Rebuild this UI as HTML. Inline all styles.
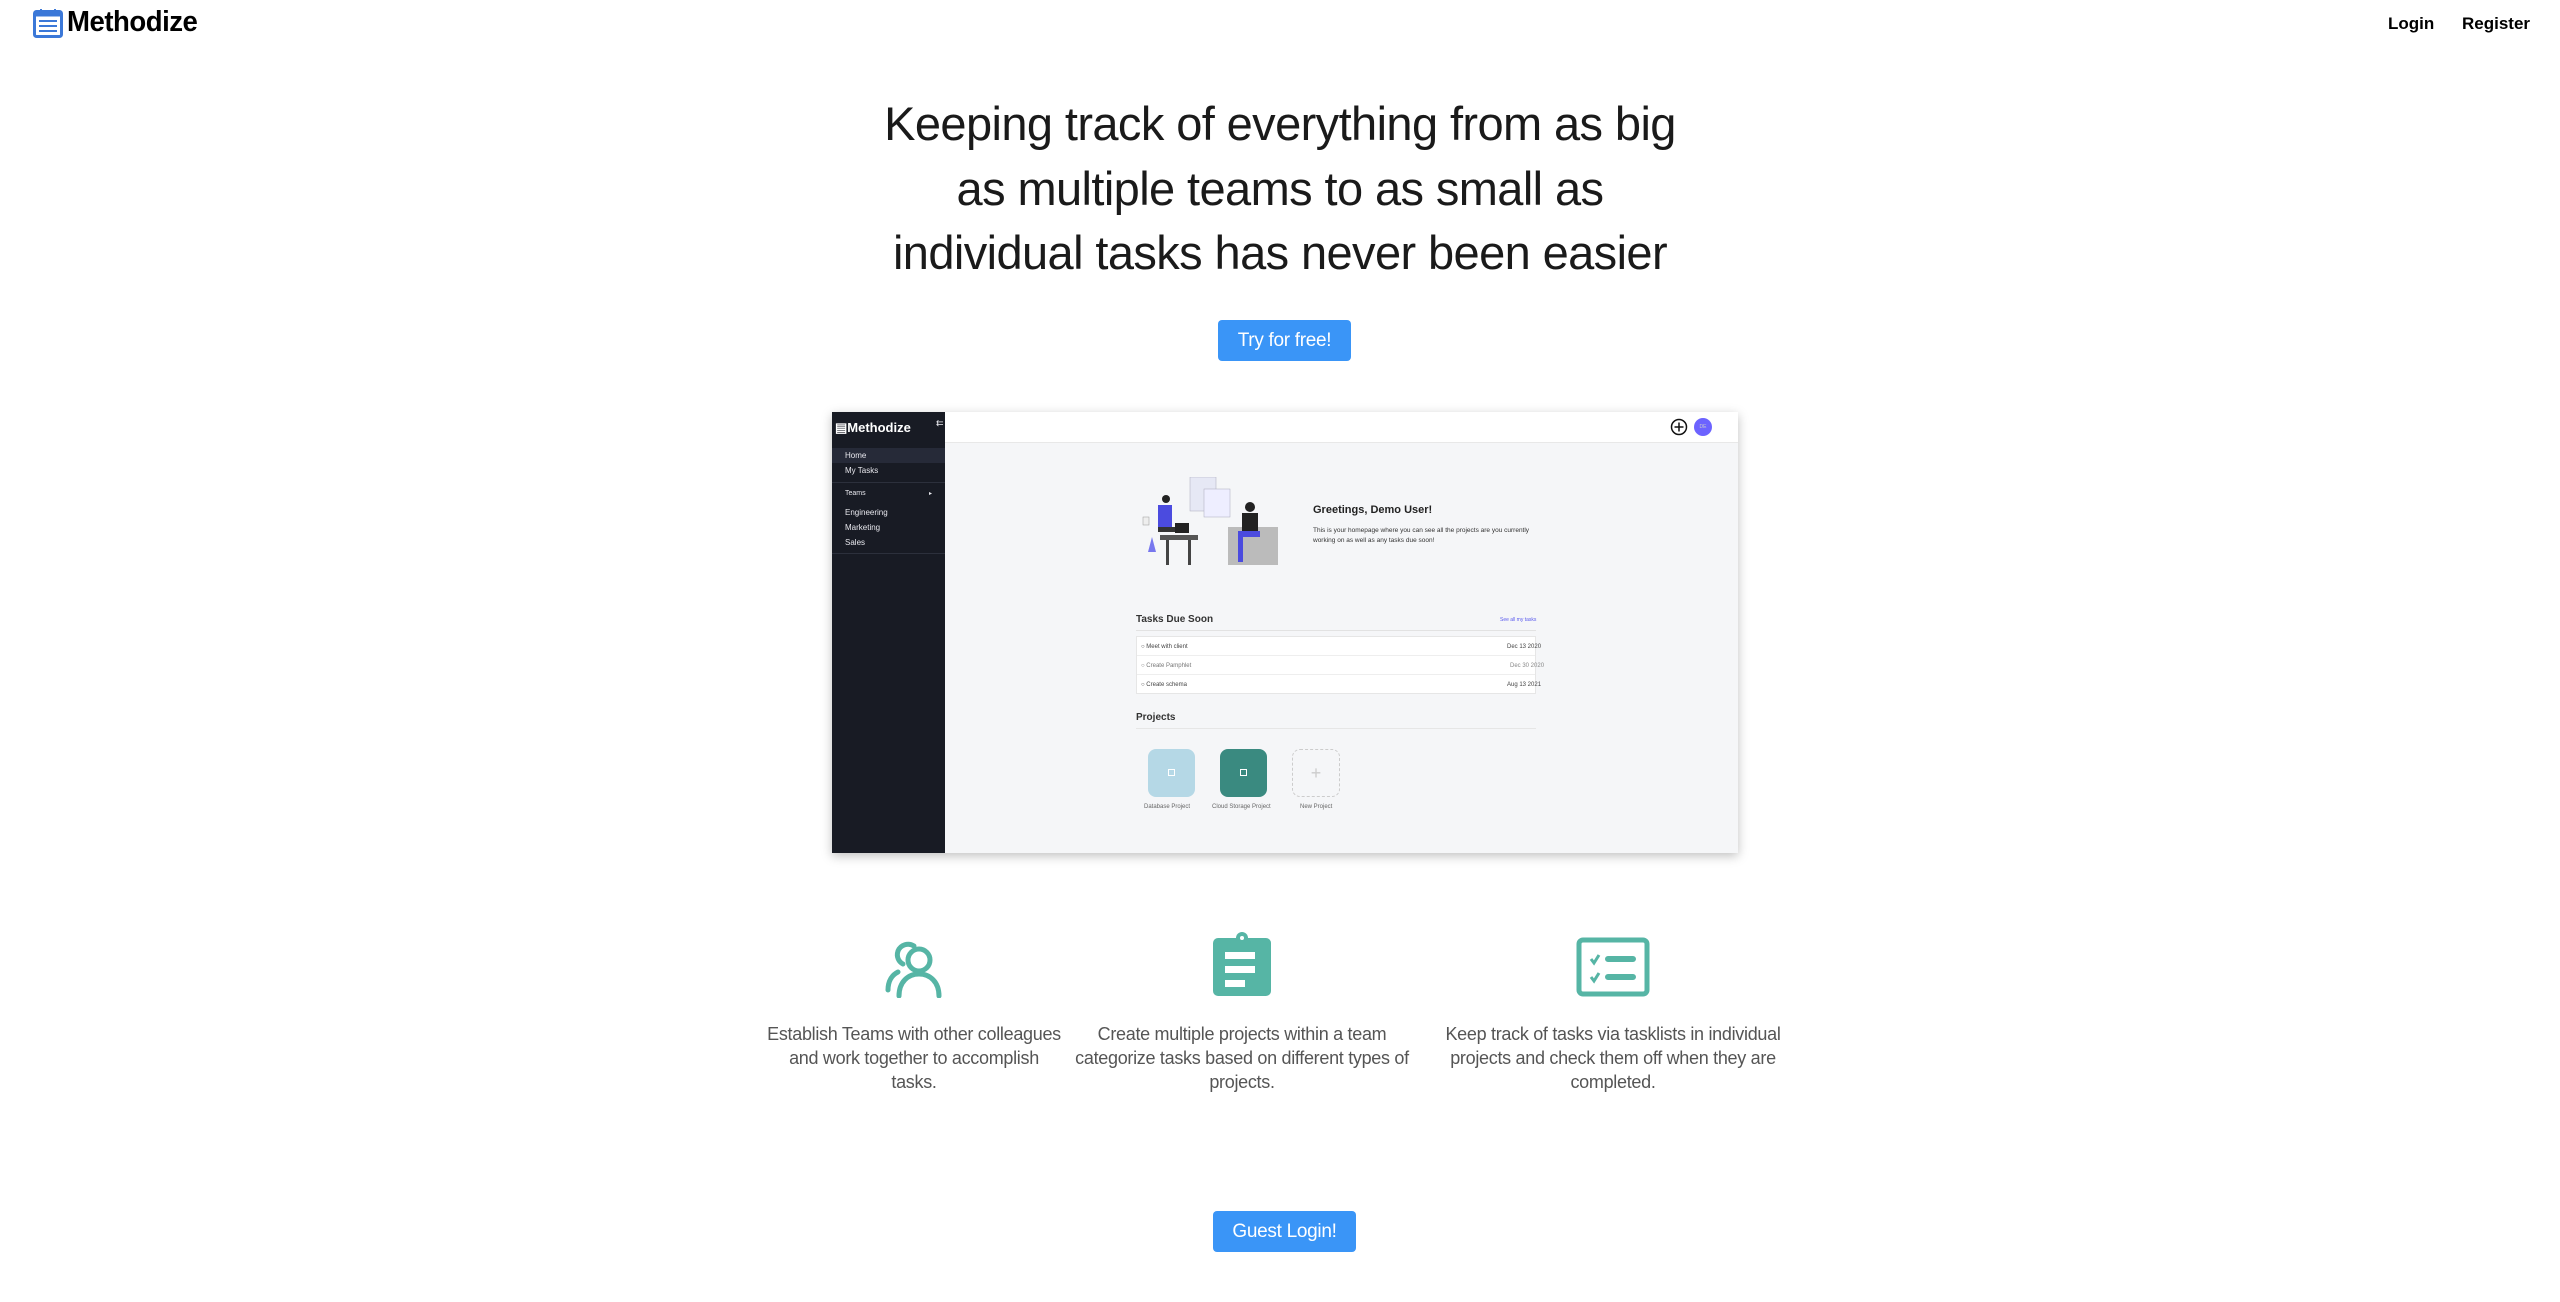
<!DOCTYPE html>
<html><head><meta charset="utf-8"><style>
*{margin:0;padding:0;box-sizing:border-box}
body{width:2560px;height:1302px;background:#fff;font-family:"Liberation Sans",sans-serif;position:relative;overflow:hidden;color:#212529}
.abs{position:absolute}
.logo{left:33px;top:6px;display:flex;align-items:center}
.logo span{font-weight:900;font-size:29px;color:#000;margin-left:4px;letter-spacing:-0.5px;transform:scaleX(0.95);transform-origin:left}
.nav{top:14px;font-weight:bold;font-size:17px;color:#000}
h1{position:absolute;left:0;width:2560px;top:92px;text-align:center;font-weight:300;font-size:47px;line-height:64.5px;color:#1a1a1a;letter-spacing:-0.6px}
.btn{position:absolute;background:#3a95f7;color:#fff;border-radius:4px;text-align:center;font-size:19px;letter-spacing:-0.3px}
.mock{left:832px;top:412px;width:906px;height:441px;box-shadow:0 3px 10px rgba(0,0,0,0.25);background:#f5f6f8;overflow:hidden}
.side{left:0;top:0;width:113px;height:441px;background:#181b24;color:#e8e8ee;font-size:8px}
.side div{position:absolute;left:13px}
.top{left:113px;top:0;right:0;height:31px;background:#fff;border-bottom:1px solid #e8e8e8}
.feat{position:absolute;top:1022px;width:360px;text-align:center;font-size:18px;line-height:24px;color:#555;letter-spacing:-0.3px}
.t{font-size:6px;color:#444}
</style></head><body>
<div class="abs logo">
<svg width="30" height="30" viewBox="0 0 30 30"><rect x="1.5" y="3.5" width="27" height="25" rx="2" fill="#fff" stroke="#3b78d8" stroke-width="3"/><rect x="1.5" y="3.5" width="27" height="5" fill="#3b78d8"/><line x1="8" y1="1" x2="8" y2="6" stroke="#3b78d8" stroke-width="2"/><line x1="22" y1="1" x2="22" y2="6" stroke="#3b78d8" stroke-width="2"/><g stroke="#3b78d8" stroke-width="2"><line x1="6" y1="13" x2="24" y2="13"/><line x1="6" y1="18" x2="24" y2="18"/><line x1="6" y1="23" x2="24" y2="23"/></g></svg>
<span>Methodize</span></div>
<div class="abs nav" style="left:2388px">Login</div>
<div class="abs nav" style="left:2462px">Register</div>
<h1>Keeping track of everything from as big<br>as multiple teams to as small as<br>individual tasks has never been easier</h1>
<div class="btn" style="left:1218px;top:320px;width:133px;height:41px;line-height:41px">Try for free!</div>

<div class="abs mock">
 <div class="abs side">
  <div style="left:3px;top:8px;font-size:13px;font-weight:900;color:#fff">▤Methodize</div>
  <div style="left:104px;top:6px;font-size:9px">⇇</div>
  <div style="left:0;top:36px;width:113px;height:15px;background:#262a38"></div>
  <div style="top:39px">Home</div>
  <div style="top:54px">My Tasks</div>
  <div style="left:0;top:70px;width:113px;height:1px;background:#2c303c"></div>
  <div style="top:78px;font-size:7px">Teams</div>
  <div style="left:97px;top:78px;font-size:6px">▸</div>
  <div style="top:96px">Engineering</div>
  <div style="top:111px">Marketing</div>
  <div style="top:126px">Sales</div>
  <div style="left:0;top:141px;width:113px;height:1px;background:#2c303c"></div>
 </div>
 <div class="abs top"></div>
 <svg class="abs" style="left:838px;top:6px" width="18" height="18" viewBox="0 0 18 18"><circle cx="9" cy="9" r="7.5" fill="none" stroke="#111" stroke-width="1.5"/><path d="M9 4.5v9M4.5 9h9" stroke="#111" stroke-width="1.5"/></svg>
 <div class="abs" style="left:862px;top:6px;width:18px;height:18px;border-radius:50%;background:#6c63ff;color:#ccc;font-size:5px;text-align:center;line-height:18px">DE</div>
 <svg class="abs" style="left:306px;top:65px" width="160" height="90" viewBox="0 0 160 90">
  <rect x="52" y="0" width="26" height="34" fill="#e6e8f5" stroke="#aab" stroke-width=".5"/><rect x="66" y="12" width="26" height="28" fill="#eef" stroke="#aab" stroke-width=".5"/>
  <rect x="22" y="58" width="38" height="5" fill="#555"/><rect x="28" y="63" width="3" height="25" fill="#444"/><rect x="50" y="63" width="3" height="25" fill="#444"/>
  <circle cx="28" cy="22" r="4" fill="#222"/><rect x="20" y="28" width="14" height="22" fill="#4b4bdf"/><rect x="20" y="50" width="22" height="5" fill="#333"/>
  <rect x="37" y="46" width="14" height="10" fill="#222"/>
  <rect x="90" y="50" width="50" height="38" fill="#bbb"/><circle cx="112" cy="30" r="5" fill="#222"/><rect x="104" y="36" width="16" height="18" fill="#222"/><rect x="100" y="54" width="22" height="6" fill="#4b4bdf"/><rect x="100" y="60" width="5" height="25" fill="#4b4bdf"/>
  <path d="M10 75l4-15 4 15z" fill="#7777ee"/><rect x="5" y="40" width="6" height="8" fill="#eee" stroke="#999" stroke-width=".5"/>
 </svg>
 <div class="abs" style="left:481px;top:92px;font-size:11px;font-weight:bold;color:#222">Greetings, Demo User!</div>
 <div class="abs" style="left:481px;top:114px;font-size:6.5px;line-height:10px;color:#333;width:230px">This is your homepage where you can see all the projects are you currently working on as well as any tasks due soon!</div>
 <div class="abs" style="left:304px;top:202px;font-size:10px;font-weight:bold;color:#333">Tasks Due Soon</div>
 <div class="abs" style="left:668px;top:205px;font-size:5px;color:#5a5aee">See all my tasks</div>
 <div class="abs" style="left:304px;top:218px;width:400px;height:1px;background:#e2e2e2"></div>
 <div class="abs" style="left:304px;top:224px;width:400px;height:58px;border:1px solid #e6e6e6;background:#fff"></div>
 <div class="abs t" style="left:309px;top:232px">○ Meet with client</div><div class="abs t" style="left:675px;top:232px">Dec 13 2020</div>
 <div class="abs" style="left:305px;top:243px;width:398px;height:1px;background:#eee"></div>
 <div class="abs t" style="left:309px;top:251px;color:#777">○ Create Pamphlet</div><div class="abs t" style="left:678px;top:251px;color:#888">Dec 30 2020</div>
 <div class="abs" style="left:305px;top:262px;width:398px;height:1px;background:#eee"></div>
 <div class="abs t" style="left:309px;top:270px">○ Create schema</div><div class="abs t" style="left:675px;top:270px">Aug 13 2021</div>
 <div class="abs" style="left:304px;top:300px;font-size:10px;font-weight:bold;color:#333">Projects</div>
 <div class="abs" style="left:304px;top:316px;width:400px;height:1px;background:#e6e6e6"></div>
 <div class="abs" style="left:316px;top:337px;width:47px;height:48px;border-radius:8px;background:#b5d8e6"></div>
 <div class="abs" style="left:388px;top:337px;width:47px;height:48px;border-radius:8px;background:#3a8a80"></div>
 <div class="abs" style="left:460px;top:337px;width:48px;height:48px;border-radius:8px;border:1px dashed #ccc;color:#ccc;font-size:18px;text-align:center;line-height:46px">+</div>
 <div class="abs" style="left:336px;top:357px;width:7px;height:7px;border:1px solid #fff"></div>
 <div class="abs" style="left:408px;top:357px;width:7px;height:7px;border:1px solid #fff"></div>
 <div class="abs t" style="left:312px;top:392px;color:#666">Database Project</div>
 <div class="abs t" style="left:380px;top:392px;color:#666">Cloud Storage Project</div>
 <div class="abs t" style="left:468px;top:392px;color:#666">New Project</div>
</div>

<svg class="abs" style="left:884px;top:932px" width="60" height="66" viewBox="0 0 60 66" fill="none" stroke="#56b5a5" stroke-width="5" stroke-linecap="round"><circle cx="35" cy="28" r="11"/><path d="M15 64c0-14 9-22 20-22s20 8 20 22"/><path d="M30 14a11 11 0 0 0-16 5c-2 6 1 11 5 13"/><path d="M4 58c0-9 4-15 10-18"/></svg>
<svg class="abs" style="left:1213px;top:932px" width="58" height="64" viewBox="0 0 58 64"><rect x="0" y="6" width="58" height="58" rx="5" fill="#56b5a5"/><circle cx="29" cy="6" r="6" fill="#56b5a5"/><circle cx="29" cy="6" r="2" fill="#fff"/><rect x="12" y="20" width="30" height="7" fill="#fff"/><rect x="12" y="34" width="30" height="7" fill="#fff"/><rect x="12" y="48" width="20" height="7" fill="#fff"/></svg>
<svg class="abs" style="left:1576px;top:937px" width="74" height="60" viewBox="0 0 74 60" fill="none" stroke="#56b5a5"><rect x="3" y="3" width="68" height="54" rx="4" stroke-width="5"/><path d="M15 22l3 4 5-8M15 40l3 4 5-8" stroke-width="3"/><path d="M32 22h25M32 40h25" stroke-width="6" stroke-linecap="round"/></svg>

<div class="feat" style="left:734px">Establish Teams with other colleagues<br>and work together to accomplish<br>tasks.</div>
<div class="feat" style="left:1062px">Create multiple projects within a team<br>categorize tasks based on different types of<br>projects.</div>
<div class="feat" style="left:1433px">Keep track of tasks via tasklists in individual<br>projects and check them off when they are<br>completed.</div>

<div class="btn" style="left:1213px;top:1211px;width:143px;height:41px;line-height:41px">Guest Login!</div>
</body></html>
